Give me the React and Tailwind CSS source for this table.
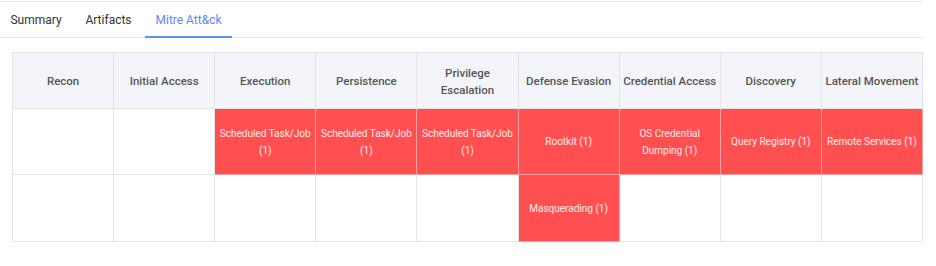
import React from "react";

const cols = [
  { h: "Recon", cells: [] },
  { h: "Initial Access", cells: [] },
  { h: "Execution", cells: ["Scheduled Task/Job (1)"] },
  { h: "Persistence", cells: ["Scheduled Task/Job (1)"] },
  { h: "Privilege Escalation", cells: ["Scheduled Task/Job (1)"] },
  { h: "Defense Evasion", cells: ["Rootkit (1)", "Masquerading (1)"] },
  { h: "Credential Access", cells: ["OS Credential Dumping (1)"] },
  { h: "Discovery", cells: ["Query Registry (1)"] },
  { h: "Lateral Movement", cells: ["Remote Services (1)"] },
];

export default function App() {
  return (
    <div className="w-[936px] h-[266px] bg-white" style={{ fontFamily: "Roboto, 'Noto Sans', sans-serif" }}>
      <div className="w-[923px] border-t border-[#e8e8e8] mt-px">
        <div className="flex h-[36px] border-b border-[#e8e8e8] text-[12px] text-[#333]">
          <div className="w-[72px] flex items-center justify-center">Summary</div>
          <div className="w-[73px] flex items-center justify-center">Artifacts</div>
          <div className="relative w-[87px] flex items-center justify-center text-[#5b87f7]">
            Mitre Att&amp;ck
            <div className="absolute left-0 right-0 bottom-[-1px] h-[2px] bg-[#5b8ff9]" />
          </div>
        </div>
      </div>
      <div className="ml-[12px] mt-[14px] w-[911px] grid grid-cols-9 grid-rows-[56px_66px_67px] border-t border-l border-[#e4e4e4]">
        {cols.map((c) => (
          <div key={c.h} className="flex items-center justify-center text-center bg-[#f4f5fa] border-r border-b border-[#e4e4e4] text-[11.5px] font-medium text-[#555] leading-[17px] px-[2px] pt-[2px]">
            {c.h === "Privilege Escalation" ? (
              <span>Privilege<br />Escalation</span>
            ) : (
              <span className="whitespace-nowrap">{c.h}</span>
            )}
          </div>
        ))}
        {[0, 1].map((r) =>
          cols.map((c) => {
            const t = c.cells[r];
            return (
              <div
                key={c.h + r}
                className={
                  "flex items-center justify-center text-center border-r border-b text-[10px] leading-[17px] px-1 " +
                  (t ? "bg-[#ff4f51] text-white/90 border-[#f0a0a0]" : "bg-white border-[#e4e4e4]")
                }
              >
                {t}
              </div>
            );
          })
        )}
      </div>
    </div>
  );
}
